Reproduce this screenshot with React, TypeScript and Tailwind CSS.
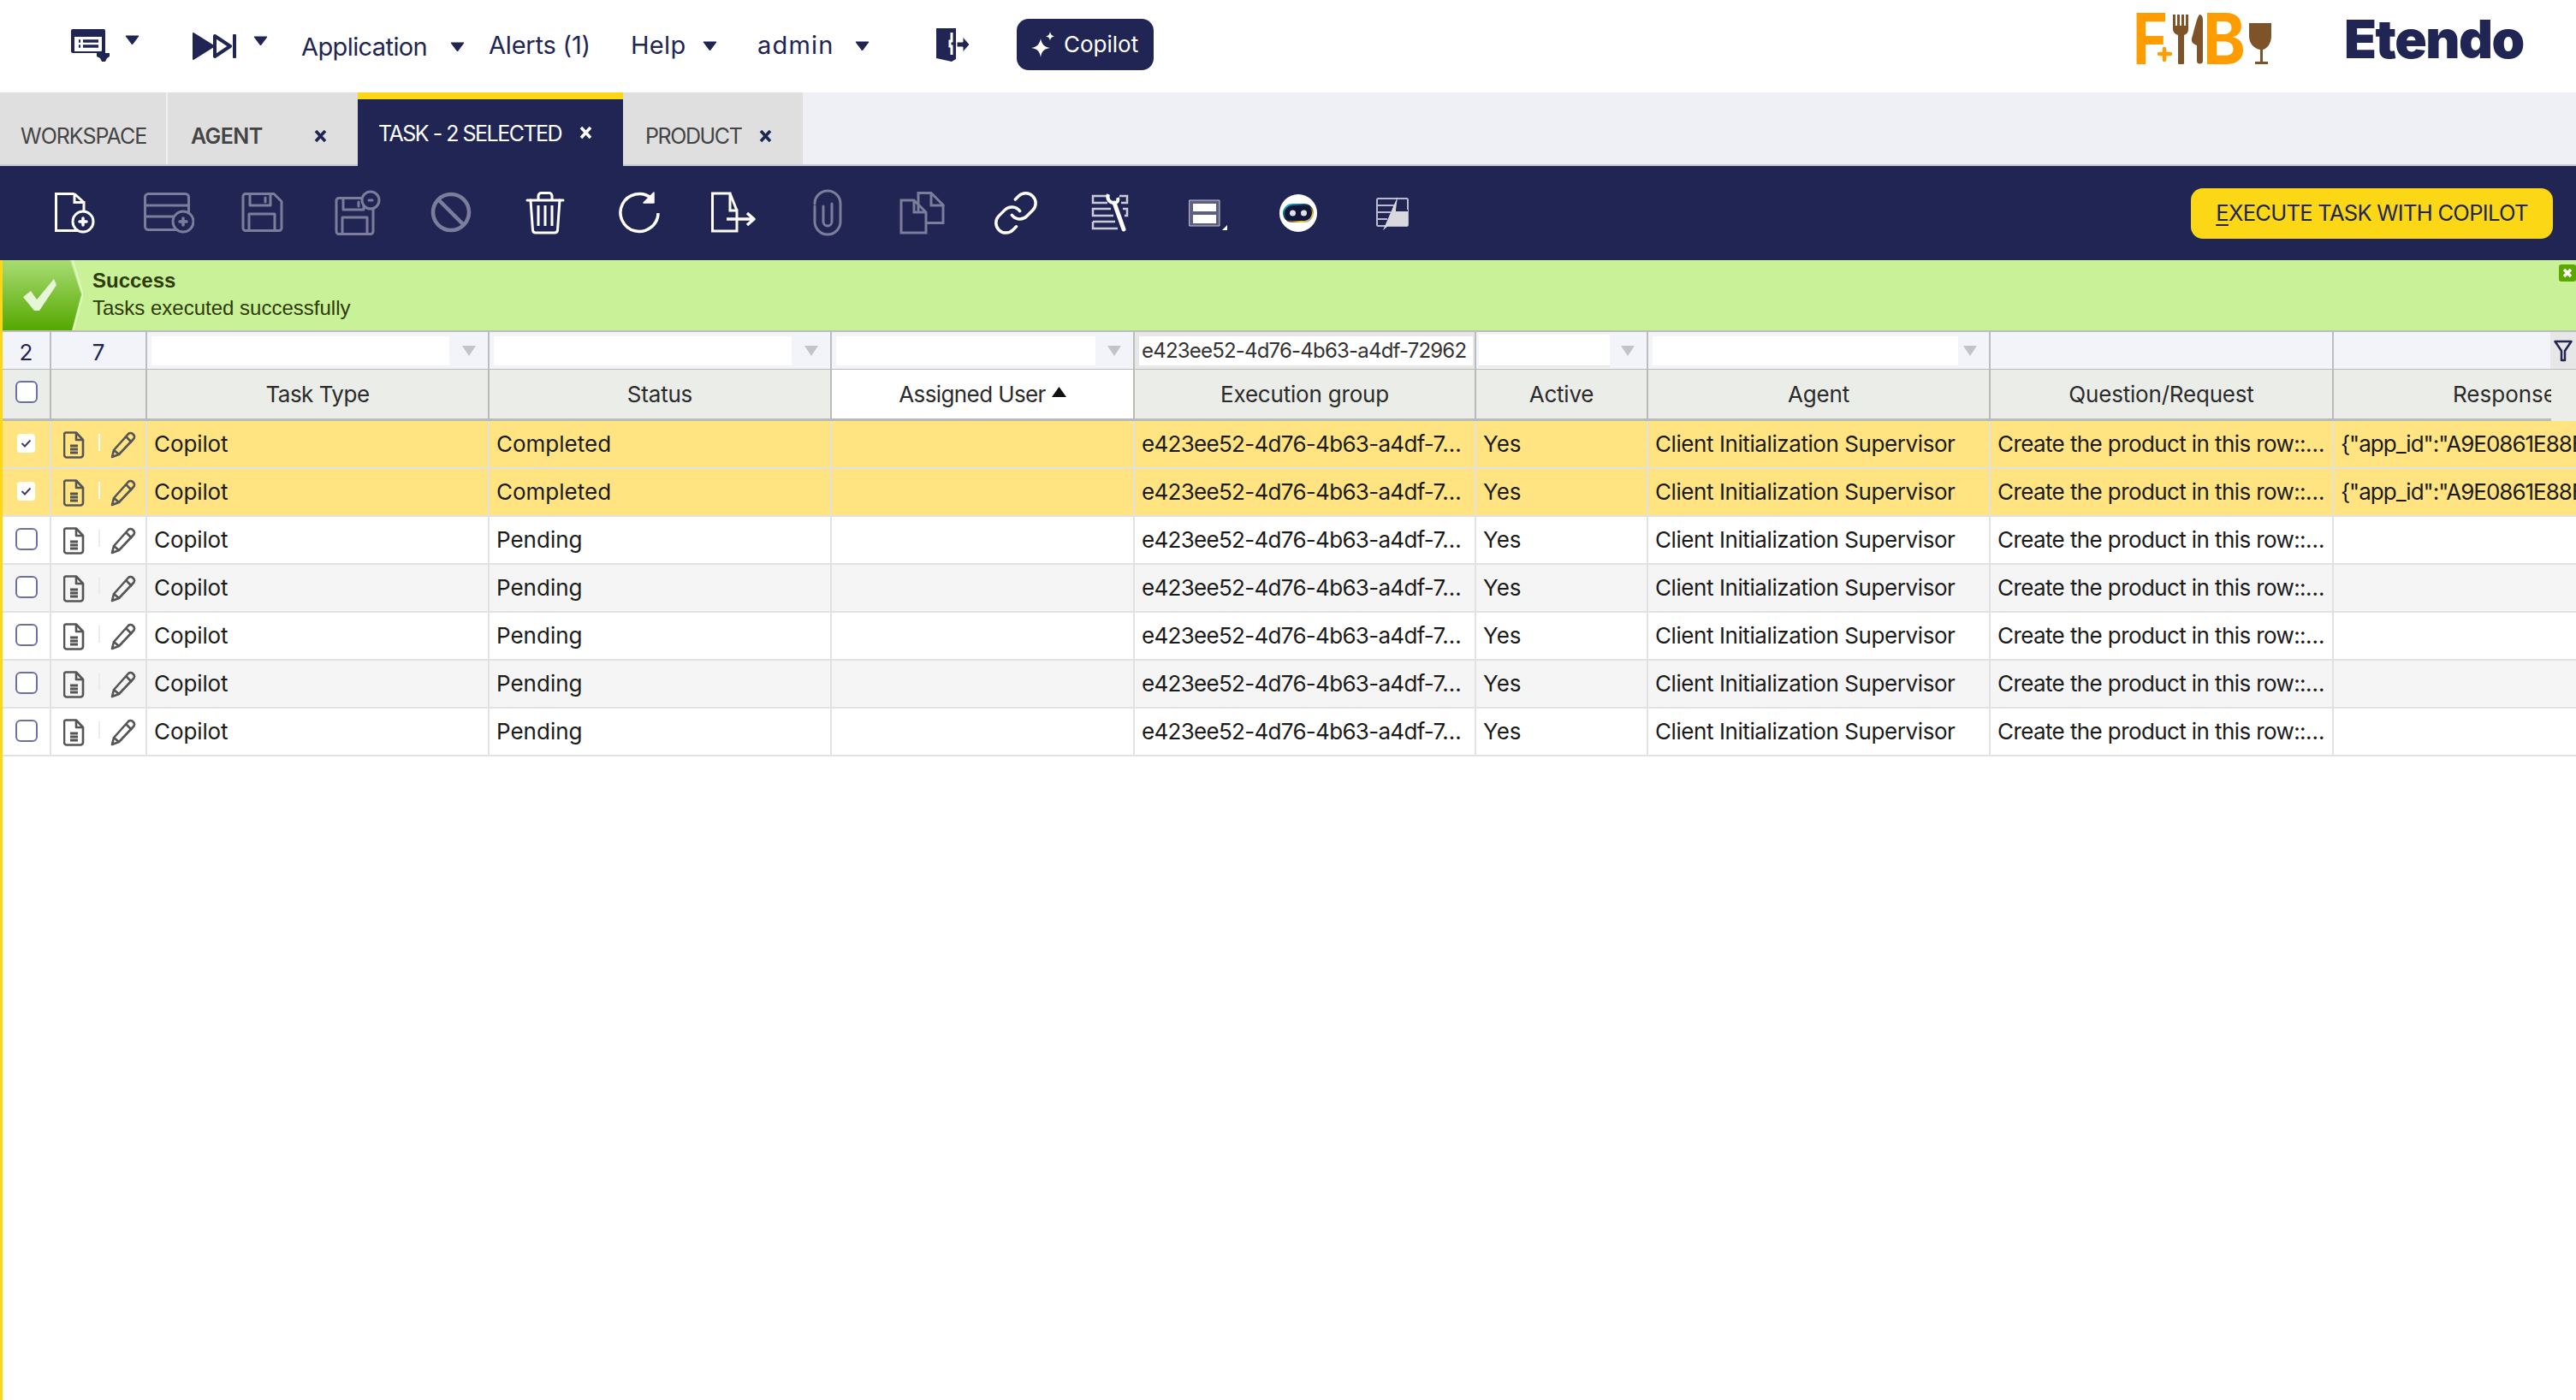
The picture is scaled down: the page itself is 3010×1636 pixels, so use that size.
import type { ReactNode } from 'react';

const NAVY = '#202553';
const DIM = '#7b7e9a';

const ROWS = [
  { status: 'Completed', selected: true },
  { status: 'Completed', selected: true },
  { status: 'Pending', selected: false },
  { status: 'Pending', selected: false },
  { status: 'Pending', selected: false },
  { status: 'Pending', selected: false },
  { status: 'Pending', selected: false },
];

const GRID = 'grid grid-cols-[57px_112px_400px_400px_354px_399px_201px_400px_401px_283px]';

function Caret({ className = '' }: { className?: string }) {
  return (
    <svg width="17" height="12" viewBox="0 0 17 12" className={`flex-none ${className}`}>
      <path d="M1 1h15l-7.500 10z" fill={NAVY} stroke={NAVY} strokeLinejoin="round" />
    </svg>
  );
}

function ToolIcon({ children, color = 'white' }: { children: ReactNode; color?: string }) {
  return (
    <div className="w-[110px] flex justify-center flex-none">
      <svg width="60" height="60" viewBox="0 0 60 60" fill="none" stroke={color} strokeWidth="3" strokeLinejoin="round" strokeLinecap="round">
        {children}
      </svg>
    </div>
  );
}

function Plus({ cx, cy, color, r = 12 }: { cx: number; cy: number; color: string; r?: number }) {
  return (
    <>
      <circle cx={cx} cy={cy} r={r} fill={NAVY} />
      <path d={`M${cx - 4} ${cy}h8M${cx} ${cy - 4}v8`} strokeWidth="3.500" stroke={color} />
    </>
  );
}

function Toolbar() {
  return (
    <div className="h-[110px] bg-[#202553] flex items-center pl-[32px] relative">
      <ToolIcon>
        <path d="M30 7.500H8.500v43H34M30 7.500v10h11v12M30 7.500l11 10" strokeLinejoin="miter" strokeLinecap="butt" />
        <Plus cx={40} cy={40} color="white" />
      </ToolIcon>
      <ToolIcon color={DIM}>
        <rect x="2.500" y="7.500" width="51" height="42" rx="4" />
        <path d="M2.500 21h51M2.500 34h40" />
        <Plus cx={47} cy={40} color={DIM} />
      </ToolIcon>
      <ToolIcon color={DIM}>
        <path d="M10 7.500h33l9 9v31a3 3 0 0 1-3 3H10a3 3 0 0 1-3-3v-37a3 3 0 0 1 3-3z" />
        <path d="M15 8v13h24V8M33 12v5M14 50V31h30v19" />
      </ToolIcon>
      <ToolIcon color={DIM}>
        <path d="M9 12.500h32l8 8v31a3 3 0 0 1-3 3H9a3 3 0 0 1-3-3v-36a3 3 0 0 1 3-3z" />
        <path d="M14 13v13h24V13M32 17v5M13 54V35h29v19" />
        <circle cx="46" cy="15" r="10" fill={NAVY} />
        <path d="M44 15h4" />
      </ToolIcon>
      <ToolIcon color={DIM}>
        <circle cx="30" cy="29" r="21" strokeWidth="4.500" />
        <path d="M15 14l30 30" strokeWidth="4.500" strokeLinecap="butt" />
      </ToolIcon>
      <ToolIcon>
        <path d="M9 15h42M22 14v-4a3.500 3.500 0 0 1 3.500-3.500h9a3.500 3.500 0 0 1 3.500 3.500v4" />
        <path d="M13 15l2.500 35a3.500 3.500 0 0 0 3.500 3h22a3.500 3.500 0 0 0 3.500-3L47 15" />
        <path d="M22 21v24M30 21v24M38 21v24" strokeLinecap="butt" />
      </ToolIcon>
      <ToolIcon>
        <path d="M52 30a22 22 0 1 1-8-17.500" strokeWidth="3.500" strokeLinecap="butt" />
        <path d="M47 6v12H35z" fill="white" stroke="white" strokeWidth="1.500" />
      </ToolIcon>
      <ToolIcon>
        <path d="M26 7H5.500v44H34V27H26zM26 7l8 20" strokeLinejoin="miter" strokeLinecap="butt" />
        <path d="M22 37h30M46 30l8 7-8 7" strokeWidth="3.500" strokeLinecap="butt" />
      </ToolIcon>
      <ToolIcon color={DIM}>
        <path d="M15 22v18a15 15 0 0 0 30 0V19a15 15 0 0 0-30 0M25 22v18a5 5 0 0 0 10 0V19" strokeWidth="3" />
      </ToolIcon>
      <ToolIcon color={DIM}>
        <path d="M26 27V6.500h15l14 14v21H36" strokeLinejoin="miter" />
        <path d="M41 7v14h14" strokeLinejoin="miter" />
        <path d="M21 15H6v38h29V29L21 15zM21 15v14h14" strokeLinejoin="miter" />
      </ToolIcon>
      <ToolIcon>
        <g transform="translate(2 2) scale(2.330)" strokeWidth="1.500">
          <path d="M10 13a5 5 0 0 0 7.540.540l3-3a5 5 0 0 0-7.070-7.070l-1.720 1.710" />
          <path d="M14 11a5 5 0 0 0-7.540-.540l-3 3a5 5 0 0 0 7.070 7.070l1.710-1.710" />
        </g>
      </ToolIcon>
      <ToolIcon color="#c9cada">
        <path d="M27 10H10v8h17M41 10h9v8h-7M31 25H10v8h24M45 25h5v8h-3M10 40h26M10 40v8h29" strokeWidth="2.500" strokeLinejoin="miter" strokeLinecap="butt" />
        <path d="M28 8c-2 5 1 10 7 10 4 0 5-3 4-6" stroke="white" strokeWidth="4" strokeLinecap="butt" />
        <path d="M35 18l11 31" stroke="white" strokeWidth="5" />
      </ToolIcon>
      <ToolIcon>
        <rect x="13" y="15" width="35" height="30" strokeWidth="1" fill="#5c5f83" stroke="#c6c7d6" />
        <rect x="17" y="19" width="27" height="9" fill="white" stroke="none" />
        <rect x="17" y="32" width="27" height="10" fill="white" stroke="none" />
        <path d="M51 50l6-6v6z" fill="white" stroke="none" />
      </ToolIcon>
      <div className="w-[110px] flex justify-center flex-none">
        <svg width="60" height="60" viewBox="0 0 60 60">
          <defs>
            <linearGradient id="botRim" x1="0" y1="0" x2="1" y2="1">
              <stop offset="0" stopColor="#18c6d8" />
              <stop offset="0.5" stopColor="#121738" />
              <stop offset="0.8" stopColor="#f3c92e" />
              <stop offset="1" stopColor="#8a86f0" />
            </linearGradient>
          </defs>
          <circle cx="30" cy="30" r="22" fill="white" />
          <rect x="13" y="20" width="34" height="20" rx="10" fill="#12173a" stroke="url(#botRim)" strokeWidth="2" />
          <circle cx="23.500" cy="30" r="3.500" fill="#dfe1ea" />
          <circle cx="36.500" cy="30" r="3.500" fill="#dfe1ea" />
        </svg>
      </div>
      <ToolIcon color="#b9bacd">
        <rect x="12" y="13" width="36" height="32" rx="1.500" strokeWidth="2" />
        <path d="M12 21h20M12 29h16M12 37h12" strokeWidth="2" strokeLinecap="butt" />
        <path d="M36 11l-2 15 14 0v19H25l-6 5 17-39z" fill="#d8d8de" stroke="none" />
        <path d="M34 27h14" stroke={NAVY} strokeWidth="2" strokeLinecap="butt" />
      </ToolIcon>
      <button className="ml-auto mr-[27px] w-[423px] h-[59px] rounded-[14px] bg-[#fbd716] text-[#202553] text-[25.500px] leading-none font-[Inter,sans-serif] tracking-[-0.7px] whitespace-nowrap">
        <span className="underline underline-offset-[4px]">E</span>XECUTE TASK WITH COPILOT
      </button>
    </div>
  );
}

function Tab({ label, width, active, bold, gap, tracking, noClose }: { label: string; width: string; active?: boolean; bold?: boolean; gap: string; tracking: string; noClose?: boolean }) {
  return (
    <div
      className={`${width} flex-none flex items-center ${
        active ? 'bg-[#202553] border-t-[8px] border-[#fbd716] text-white pb-[8px] h-[86px]' : 'h-full bg-[#dfdfdf] text-[#444444]'
      }`}
    >
      <span className={`${gap} ${tracking} whitespace-nowrap text-[25px] leading-none ${bold ? 'font-semibold' : ''}`}>{label}</span>
      {!noClose && (
        <svg width="15" height="16" viewBox="0 0 15 16" className={`ml-auto mr-[36px] flex-none ${active ? 'mt-[8px]' : 'mt-[18px]'}`} stroke={active ? 'white' : NAVY} strokeWidth="3.500">
          <path d="M2 2l11 12M13 2L2 14" />
        </svg>
      )}
    </div>
  );
}

function FilterSelect({ inputWidth }: { inputWidth: string }) {
  return (
    <div className="border-r-2 border-[#bdbdbd] bg-[#f3f4f9] flex items-center pl-[5px]">
      <div className={`${inputWidth} h-[34px] bg-white flex-none`} />
      <svg width="16" height="12" viewBox="0 0 16 12" className="ml-auto mr-[14px] flex-none">
        <path d="M0 0h16l-8 12z" fill="#c3c3c8" />
      </svg>
    </div>
  );
}

function HeaderCell({ children, white }: { children: ReactNode; white?: boolean }) {
  return (
    <div className={`border-r-2 border-b-[3px] border-[#b9bbb7] flex items-center justify-center text-[26px] leading-none text-[#2b2b2b] tracking-[-0.2px] ${white ? 'bg-white' : 'bg-[#ebede9]'}`}>
      {children}
    </div>
  );
}

function RowIcons({ selected }: { selected: boolean }) {
  return (
    <div className="flex items-center pl-[14px] mt-[2px]">
      <svg width="25" height="32" viewBox="0 0 25 32" fill="none" stroke="#555555" strokeWidth="2.600" strokeLinejoin="round" className="flex-none">
        <path d="M3 1.500h12l8 8.500v17.500a3 3 0 0 1-3 3H4a3 3 0 0 1-3-3V3.500a2 2 0 0 1 2-2z" />
        <path d="M15 2v8h8" />
        <path d="M8 17h9M8 21h9M8 25h9" strokeWidth="2.800" />
      </svg>
      <div className={`ml-[16px] w-[2px] h-[20px] flex-none mb-[6px] ${selected ? 'bg-white' : 'bg-[#ececec]'}`} />
      <svg width="30" height="32" viewBox="0 0 30 32" fill="none" stroke="#555555" strokeWidth="2.600" strokeLinejoin="round" className="ml-[12px] flex-none">
        <path d="M21 3a3.500 3.500 0 0 1 5 0l1 1a3.500 3.500 0 0 1 0 5L10 27l-8 3 2-8z" />
        <path d="M18 6l7 7M4 22l6 5" />
      </svg>
    </div>
  );
}

function Checkbox({ checked }: { checked?: boolean }) {
  if (checked) {
    return (
      <div className="w-[21px] h-[22px] bg-white rounded-[4px] flex items-center justify-center">
        <svg width="13" height="10" viewBox="0 0 13 10" fill="none" stroke="#3b3f6e" strokeWidth="2">
          <path d="M1.500 5l3.500 3.500 6.500-7" />
        </svg>
      </div>
    );
  }
  return <div className="w-[26px] h-[26px] bg-white rounded-[6px] border-2 border-[#6c70a6]" />;
}

export default function App() {
  return (
    <div className="w-[3010px] h-[1636px] overflow-hidden bg-white text-[#1a1a1a] font-[Inter,sans-serif]">
      <header className="h-[108px] flex items-center text-[#202553] text-[29px] leading-none pl-[83px]">
        <svg width="46" height="38" viewBox="0 0 46 38" className="flex-none mb-[2px]">
          <path d="M2 0h36a2 2 0 0 1 2 2v26H2a2 2 0 0 1-2-2V2a2 2 0 0 1 2-2z" fill={NAVY} />
          <rect x="4" y="9" width="32" height="17" fill="white" />
          <path d="M9 14h2M14 14h18M9 20h2M14 20h18" stroke={NAVY} strokeWidth="3.500" />
          <path d="M37 24l3 4h5v4l-3 2-2 4h-4l-2-4-4-2 0-4 4-1z" fill={NAVY} />
        </svg>
        <Caret className="ml-[17px] mb-[14px]" />
        <svg width="53" height="32" viewBox="0 0 53 32" className="ml-[62px] flex-none" fill={NAVY}>
          <path d="M1 1l24 15L1 31z" stroke={NAVY} strokeWidth="2" strokeLinejoin="round" />
          <path d="M26 4l18 12-18 12z" fill="none" stroke={NAVY} strokeWidth="4" strokeLinejoin="round" />
          <rect x="47" y="2" width="4" height="28" rx="1" />
        </svg>
        <Caret className="ml-[18px] mb-[12px]" />
        <span className="ml-[39px] w-[146px] flex-none whitespace-nowrap tracking-[-0.6px]">Application</span>
        <Caret className="ml-[28px] mt-[2px]" />
        <span className="ml-[28px] w-[118px] flex-none whitespace-nowrap mb-[4px] tracking-[-0.2px]">Alerts (1)</span>
        <span className="ml-[48px] w-[62px] flex-none whitespace-nowrap mb-[4px] tracking-[0.3px]">Help</span>
        <Caret className="ml-[22px]" />
        <span className="ml-[47px] w-[91px] flex-none whitespace-nowrap mb-[4px] tracking-[1.2px]">admin</span>
        <Caret className="ml-[23px]" />
        <svg width="40" height="40" viewBox="0 0 40 40" className="ml-[77px] flex-none mb-[4px]" fill={NAVY}>
          <path d="M1 1h23v36l-5 3-18-4z" />
          <path d="M19 6v10h-2v6h2v10" stroke="white" strokeWidth="3" fill="none" />
          <path d="M25 17h7v-6l8 9-8 9v-6h-7z" stroke="white" strokeWidth="1" />
        </svg>
        <button className="ml-[55px] mb-[4px] w-[160px] h-[60px] rounded-[14px] bg-[#202553] text-white text-[26px] flex items-center pl-[17px] gap-[10px] flex-none">
          <svg width="28" height="30" viewBox="0 0 28 30" fill="white" className="flex-none">
            <path d="M11 8c1 6 4 10 11 11-7 1-10 4-11 11-1-7-4-10-11-11 7-1 10-5 11-11z" />
            <path d="M22 0c.500 3 2 5 5 5.500-3 .5-4.500 2-5 5-.5-3-2-4.500-5-5 3-.5 4.500-2.500 5-5.500z" />
          </svg>
          Copilot
        </button>
        <svg width="158" height="60" viewBox="0 0 158 60" className="ml-[1148px] flex-none mb-[18px]">
          <text x="-4" y="60" fontSize="83" fontWeight="700" fill="#ff9d00" textLength="41" lengthAdjust="spacingAndGlyphs" fontFamily="Inter, sans-serif">F</text>
          <text x="78" y="60" fontSize="83" fontWeight="700" fill="#ff9d00" textLength="50" lengthAdjust="spacingAndGlyphs" fontFamily="Inter, sans-serif">B</text>
          <path d="M33 41v14M26 48h14" stroke="white" strokeWidth="8" />
          <path d="M33 42v13M27 48h13" stroke="#ff9d00" strokeWidth="4.500" strokeLinecap="round" />
          <path d="M43 2h3v13h2V2h3v13h2V2h3v13h2V2h3v17c0 4-2 6-5 7v32a3 3 0 0 1-7 0V26c-3-1-6-3-6-7z" fill="#7f5329" />
          <path d="M74 2c3 0 4 3 4 7v47a3 3 0 0 1-7 0V38c-3-1-7-3-6-8 2-6 6-25 9-28z" fill="#7f5329" />
          <path d="M132 12h26v15c0 9-5 15-10 16v14h6v3h-15v-3h6V43c-7-1-13-7-13-16z" fill="#7f5329" />
        </svg>
        <span className="ml-[85px] mb-[16px] text-[62px] leading-none font-black tracking-[-1.500px] flex-none whitespace-nowrap">Etendo</span>
      </header>

      <nav className="h-[86px] bg-[#eff0f5] border-b-2 border-[#c5c7d0] flex items-start">
        <div className="h-[84px] flex">
          <Tab label="WORKSPACE" width="w-[194px]" gap="ml-[24px] mt-[18px]" tracking="tracking-[-1px]" noClose />
          <div className="w-[2px] bg-[#eff0f5]" />
          <Tab label="AGENT" width="w-[222px]" gap="ml-[27px] mt-[18px]" tracking="tracking-[-0.6px]" bold />
          <Tab label="TASK - 2 SELECTED" width="w-[310px]" gap="ml-[24px] mt-[10px]" tracking="tracking-[-1.5px]" active />
          <Tab label="PRODUCT" width="w-[210px]" gap="ml-[26px] mt-[18px]" tracking="tracking-[-1.4px]" />
        </div>
      </nav>

      <Toolbar />

      <div className="border-l-[3px] border-[#fbd716] h-[1332px]">
        <div className="h-[82px] bg-[#c9f198] flex">
          <svg width="94" height="82" viewBox="0 0 94 82" className="flex-none">
            <defs>
              <linearGradient id="okBg" x1="0" y1="0" x2="0" y2="1">
                <stop offset="0" stopColor="#a9dc74" />
                <stop offset="1" stopColor="#55a800" />
              </linearGradient>
            </defs>
            <path d="M0 0h79l13 40-11 42H0z" fill="url(#okBg)" />
            <path d="M82 0l12 40-11 42" fill="none" stroke="#e4f7c9" strokeWidth="1.500" />
            <path d="M24 43l9-7 7 10 20-24 3 7-20 30h-6z" fill="#e8f6d8" />
          </svg>
          <div className="ml-[11px] font-['Liberation_Sans',sans-serif] text-[#2e3a08] text-[24px] leading-[32px] pt-[8px] whitespace-nowrap">
            <div className="font-bold">Success</div>
            <div>Tasks executed successfully</div>
          </div>
          <svg width="20" height="20" viewBox="0 0 20 20" className="ml-auto mt-[5px] flex-none">
            <rect width="20" height="20" rx="3" fill="#5aa900" />
            <path d="M6 6l8 8M14 6l-8 8" stroke="white" strokeWidth="3.500" />
          </svg>
        </div>

        <div className="border-t-2 border-[#bdbdbd]">
          <div className={`${GRID} h-[44px] text-[#202553] border-b-[3px] border-[#b9bbb7]`}>
            <div className="border-r-2 border-[#bdbdbd] bg-[#f3f4f9] flex items-center justify-center text-[26px] pt-[4px]">2</div>
            <div className="border-r-2 border-[#bdbdbd] bg-[#f3f4f9] flex items-center justify-center text-[26px] pt-[4px]">7</div>
            <FilterSelect inputWidth="w-[348px]" />
            <FilterSelect inputWidth="w-[348px]" />
            <FilterSelect inputWidth="w-[303px]" />
            <div className="border-r-2 border-[#bdbdbd] bg-[#e7e7e7] flex items-center pl-[5px]">
              <div className="w-[390px] h-[34px] bg-white flex items-center pl-[3px] text-[24px] tracking-[-0.8px] text-[#333333] whitespace-nowrap overflow-hidden flex-none">
                e423ee52-4d76-4b63-a4df-72962
              </div>
            </div>
            <div className="border-r-2 border-[#bdbdbd] bg-[#f3f4f9] flex items-center pl-[3px]">
              <div className="w-[153px] h-[38px] bg-white border-b-2 border-[#e7e7e7] flex-none" />
              <svg width="16" height="12" viewBox="0 0 16 12" className="ml-auto mr-[14px] flex-none">
                <path d="M0 0h16l-8 12z" fill="#c3c3c8" />
              </svg>
            </div>
            <FilterSelect inputWidth="w-[357px]" />
            <div className="border-r-2 border-[#bdbdbd] bg-[#f3f4f9]" />
            <div className="bg-[#f3f4f9] flex justify-end">
              <div className="w-[30px] h-full bg-[#e7e7e7] flex items-center justify-center">
                <svg width="22" height="26" viewBox="0 0 22 26" fill="none" stroke="#202553" strokeWidth="2.500" strokeLinejoin="round">
                  <path d="M1.500 2h19l-7.500 11v11h-4V13z" />
                </svg>
              </div>
            </div>
          </div>

          <div className={`${GRID} h-[60px]`}>
            <HeaderCell>
              <div className="mb-[6px]"><Checkbox /></div>
            </HeaderCell>
            <HeaderCell> </HeaderCell>
            <HeaderCell><span className="tracking-[-0.5px]">Task Type</span></HeaderCell>
            <HeaderCell>Status</HeaderCell>
            <HeaderCell white>
              <span className="tracking-[-0.6px]">Assigned User</span>
              <svg width="17" height="12" viewBox="0 0 17 12" className="ml-[7px] mb-[6px] flex-none">
                <path d="M8.500 0L17 12H0z" fill="#111111" />
              </svg>
            </HeaderCell>
            <HeaderCell>Execution group</HeaderCell>
            <HeaderCell>Active</HeaderCell>
            <HeaderCell>Agent</HeaderCell>
            <HeaderCell>Question/Request</HeaderCell>
            <div className="bg-[#ebede9] flex text-[26px] leading-none text-[#2b2b2b]">
              <div className="w-[254px] h-full border-b-[3px] border-[#b9bbb7] flex items-center overflow-hidden whitespace-nowrap pl-[139px]">Response</div>
            </div>
          </div>

          {ROWS.map((row, i) => (
            <div
              key={i}
              className={`${GRID} h-[56px] border-b-2 border-[#e2e2e2] text-[26px] leading-none whitespace-nowrap ${
                row.selected ? 'bg-[#ffe481]' : i % 2 === 1 ? 'bg-[#f5f5f5]' : 'bg-white'
              }`}
            >
              <div className="border-r-2 border-[#e2e2e2] flex items-center justify-center pb-[2px]"><Checkbox checked={row.selected} /></div>
              <div className="border-r-2 border-[#e2e2e2] flex items-center"><RowIcons selected={row.selected} /></div>
              <div className="border-r-2 border-[#e2e2e2] flex items-center pl-[8px] tracking-[-0.1px]">Copilot</div>
              <div className="border-r-2 border-[#e2e2e2] flex items-center pl-[8px]">{row.status}</div>
              <div className="border-r-2 border-[#e2e2e2]" />
              <div className="border-r-2 border-[#e2e2e2] flex items-center pl-[8px] tracking-[-0.7px]">e423ee52-4d76-4b63-a4df-7…</div>
              <div className="border-r-2 border-[#e2e2e2] flex items-center pl-[8px]">Yes</div>
              <div className="border-r-2 border-[#e2e2e2] flex items-center pl-[8px] tracking-[-0.42px]">Client Initialization Supervisor</div>
              <div className="border-r-2 border-[#e2e2e2] flex items-center pl-[8px] tracking-[-0.6px]">Create the product in this row::…</div>
              <div className="flex items-center pl-[8px] overflow-hidden tracking-[-1px]">{row.selected ? '{"app_id":"A9E0861E88BC' : ''}</div>
            </div>
          ))}
        </div>
      </div>
    </div>
  );
}
